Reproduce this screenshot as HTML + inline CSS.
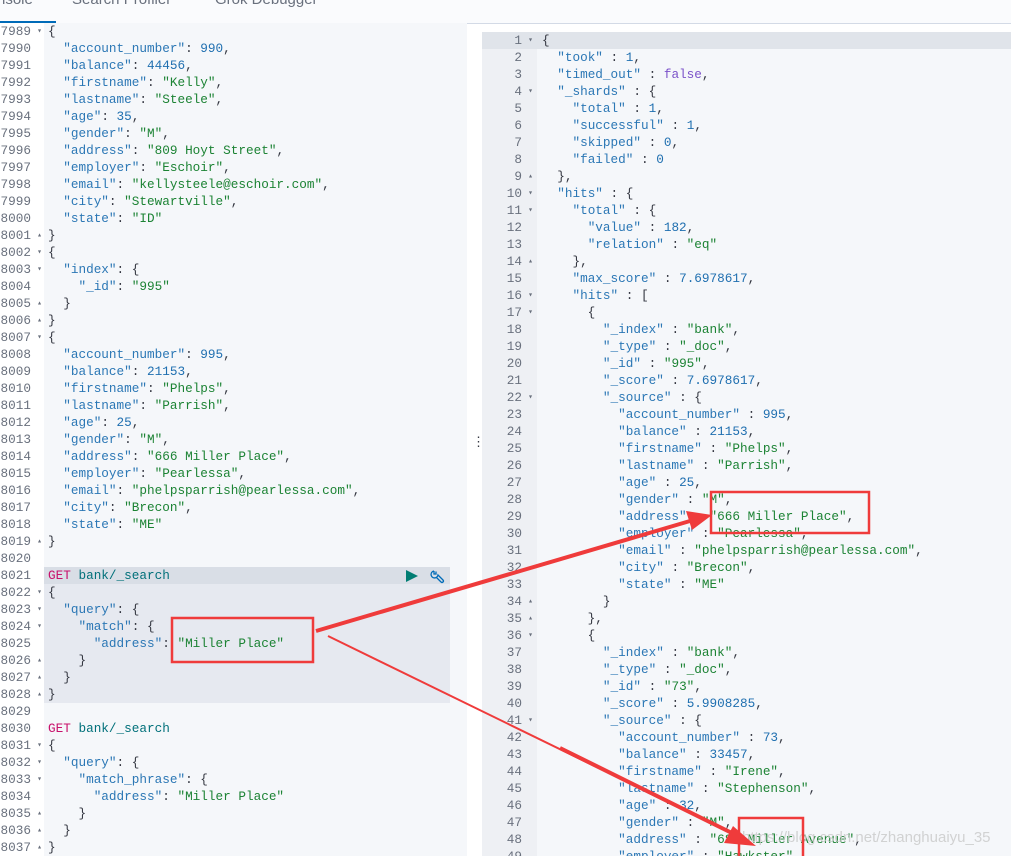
<!DOCTYPE html>
<html><head><meta charset="utf-8"><style>
*{margin:0;padding:0;box-sizing:border-box}
body{width:1011px;height:856px;overflow:hidden;background:#fff;font-family:"Liberation Mono",monospace;font-size:12.7px;color:#343741;position:relative}
.tabs{position:absolute;left:0;top:0;width:1011px;height:24px;background:#fafbfd;border-bottom:1px solid #d3dae6;font-family:"Liberation Sans",sans-serif;font-size:15px;color:#69707d}
.tabs span{position:absolute;top:-9px}
.ul{position:absolute;left:0;top:21px;width:56px;height:3px;background:#006bb8}
.ed{position:absolute;overflow:hidden}
.g{position:absolute;top:0;bottom:0;text-align:right;color:#69707d}
.g .l{position:relative;padding-right:13px}
.c{position:absolute;top:0;bottom:0}
.l{height:17px;line-height:17px;white-space:pre}
.k{color:#2b77b5}.s{color:#1c8334}.n{color:#1f6fb0}.b{color:#7b52c9}.m{color:#c8106b}.u{color:#00707a}
.f{position:absolute;right:2px;top:0;font-size:8px;color:#69707d}
</style></head><body>
<div class="tabs"><span style="left:-3px">nsole</span><span style="left:72px">Search Profiler</span><span style="left:215px">Grok Debugger</span><div class="ul"></div></div>

<div class="ed" style="left:0;top:23px;width:467px;height:833px;background:#f5f7fa">
<div style="position:absolute;left:0;top:0;width:44px;height:833px;background:#fff"></div>
<div style="position:absolute;left:44px;top:544px;width:406px;height:136px;background:#e6e9f0"></div>
<div style="position:absolute;left:44px;top:544px;width:406px;height:17px;background:#d9dee6"></div>
<div class="g" style="left:0;width:44px">
<div class="l">7989<span class="f">▾</span></div><div class="l">7990</div><div class="l">7991</div><div class="l">7992</div><div class="l">7993</div><div class="l">7994</div><div class="l">7995</div><div class="l">7996</div><div class="l">7997</div><div class="l">7998</div><div class="l">7999</div><div class="l">8000</div>
<div class="l">8001<span class="f">▴</span></div><div class="l">8002<span class="f">▾</span></div><div class="l">8003<span class="f">▾</span></div><div class="l">8004</div><div class="l">8005<span class="f">▴</span></div><div class="l">8006<span class="f">▴</span></div><div class="l">8007<span class="f">▾</span></div>
<div class="l">8008</div><div class="l">8009</div><div class="l">8010</div><div class="l">8011</div><div class="l">8012</div><div class="l">8013</div><div class="l">8014</div><div class="l">8015</div><div class="l">8016</div><div class="l">8017</div><div class="l">8018</div>
<div class="l">8019<span class="f">▴</span></div><div class="l">8020</div><div class="l">8021</div><div class="l">8022<span class="f">▾</span></div><div class="l">8023<span class="f">▾</span></div><div class="l">8024<span class="f">▾</span></div><div class="l">8025</div><div class="l">8026<span class="f">▴</span></div><div class="l">8027<span class="f">▴</span></div><div class="l">8028<span class="f">▴</span></div>
<div class="l">8029</div><div class="l">8030</div><div class="l">8031<span class="f">▾</span></div><div class="l">8032<span class="f">▾</span></div><div class="l">8033<span class="f">▾</span></div><div class="l">8034</div><div class="l">8035<span class="f">▴</span></div><div class="l">8036<span class="f">▴</span></div><div class="l">8037<span class="f">▴</span></div>
</div>
<div class="c" style="left:48px">
<div class="l">{</div>
<div class="l">  <span class="k">"account_number"</span>: <span class="n">990</span>,</div>
<div class="l">  <span class="k">"balance"</span>: <span class="n">44456</span>,</div>
<div class="l">  <span class="k">"firstname"</span>: <span class="s">"Kelly"</span>,</div>
<div class="l">  <span class="k">"lastname"</span>: <span class="s">"Steele"</span>,</div>
<div class="l">  <span class="k">"age"</span>: <span class="n">35</span>,</div>
<div class="l">  <span class="k">"gender"</span>: <span class="s">"M"</span>,</div>
<div class="l">  <span class="k">"address"</span>: <span class="s">"809 Hoyt Street"</span>,</div>
<div class="l">  <span class="k">"employer"</span>: <span class="s">"Eschoir"</span>,</div>
<div class="l">  <span class="k">"email"</span>: <span class="s">"kellysteele@eschoir.com"</span>,</div>
<div class="l">  <span class="k">"city"</span>: <span class="s">"Stewartville"</span>,</div>
<div class="l">  <span class="k">"state"</span>: <span class="s">"ID"</span></div>
<div class="l">}</div>
<div class="l">{</div>
<div class="l">  <span class="k">"index"</span>: {</div>
<div class="l">    <span class="k">"_id"</span>: <span class="s">"995"</span></div>
<div class="l">  }</div>
<div class="l">}</div>
<div class="l">{</div>
<div class="l">  <span class="k">"account_number"</span>: <span class="n">995</span>,</div>
<div class="l">  <span class="k">"balance"</span>: <span class="n">21153</span>,</div>
<div class="l">  <span class="k">"firstname"</span>: <span class="s">"Phelps"</span>,</div>
<div class="l">  <span class="k">"lastname"</span>: <span class="s">"Parrish"</span>,</div>
<div class="l">  <span class="k">"age"</span>: <span class="n">25</span>,</div>
<div class="l">  <span class="k">"gender"</span>: <span class="s">"M"</span>,</div>
<div class="l">  <span class="k">"address"</span>: <span class="s">"666 Miller Place"</span>,</div>
<div class="l">  <span class="k">"employer"</span>: <span class="s">"Pearlessa"</span>,</div>
<div class="l">  <span class="k">"email"</span>: <span class="s">"phelpsparrish@pearlessa.com"</span>,</div>
<div class="l">  <span class="k">"city"</span>: <span class="s">"Brecon"</span>,</div>
<div class="l">  <span class="k">"state"</span>: <span class="s">"ME"</span></div>
<div class="l">}</div>
<div class="l"> </div>
<div class="l"><span class="m">GET</span> <span class="u">bank/_search</span></div>
<div class="l">{</div>
<div class="l">  <span class="k">"query"</span>: {</div>
<div class="l">    <span class="k">"match"</span>: {</div>
<div class="l">      <span class="k">"address"</span>: <span class="s">"Miller Place"</span></div>
<div class="l">    }</div>
<div class="l">  }</div>
<div class="l">}</div>
<div class="l"> </div>
<div class="l"><span class="m">GET</span> <span class="u">bank/_search</span></div>
<div class="l">{</div>
<div class="l">  <span class="k">"query"</span>: {</div>
<div class="l">    <span class="k">"match_phrase"</span>: {</div>
<div class="l">      <span class="k">"address"</span>: <span class="s">"Miller Place"</span></div>
<div class="l">    }</div>
<div class="l">  }</div>
<div class="l">}</div>
</div>
<svg style="position:absolute;left:404px;top:546px" width="44" height="16"><polygon points="2,1 14,7 2,13" fill="#017d73"/><g transform="translate(27,1)" fill="none" stroke="#006bb8" stroke-width="1.3"><path d="M3 1 A3.5 3.5 0 1 0 7 5 L12 10 A1.4 1.4 0 0 1 10 12 L5 7 M3 1 L3 4 L5 4 L5 1.5"/></g></svg>
</div>
<div style="position:absolute;left:472px;top:434px;color:#343741;font-size:13px;font-family:'Liberation Sans'">⋮</div>

<div class="ed" style="left:482px;top:32px;width:529px;height:824px;background:#f5f7fa">
<div style="position:absolute;left:0;top:0;width:55px;height:824px;background:#eef0f4"></div>
<div style="position:absolute;left:0;top:0;width:529px;height:17px;background:#e0e4ea"></div>
<div class="g" style="left:0;width:53px">
<div class="l">1<span class="f">▾</span></div><div class="l">2</div><div class="l">3</div><div class="l">4<span class="f">▾</span></div><div class="l">5</div><div class="l">6</div><div class="l">7</div><div class="l">8</div><div class="l">9<span class="f">▴</span></div><div class="l">10<span class="f">▾</span></div>
<div class="l">11<span class="f">▾</span></div><div class="l">12</div><div class="l">13</div><div class="l">14<span class="f">▴</span></div><div class="l">15</div><div class="l">16<span class="f">▾</span></div><div class="l">17<span class="f">▾</span></div><div class="l">18</div><div class="l">19</div><div class="l">20</div>
<div class="l">21</div><div class="l">22<span class="f">▾</span></div><div class="l">23</div><div class="l">24</div><div class="l">25</div><div class="l">26</div><div class="l">27</div><div class="l">28</div><div class="l">29</div><div class="l">30</div>
<div class="l">31</div><div class="l">32</div><div class="l">33</div><div class="l">34<span class="f">▴</span></div><div class="l">35<span class="f">▴</span></div><div class="l">36<span class="f">▾</span></div><div class="l">37</div><div class="l">38</div><div class="l">39</div><div class="l">40</div>
<div class="l">41<span class="f">▾</span></div><div class="l">42</div><div class="l">43</div><div class="l">44</div><div class="l">45</div><div class="l">46</div><div class="l">47</div><div class="l">48</div><div class="l">49</div>
</div>
<div class="c" style="left:60px">
<div class="l">{</div>
<div class="l">  <span class="k">"took"</span> : <span class="n">1</span>,</div>
<div class="l">  <span class="k">"timed_out"</span> : <span class="b">false</span>,</div>
<div class="l">  <span class="k">"_shards"</span> : {</div>
<div class="l">    <span class="k">"total"</span> : <span class="n">1</span>,</div>
<div class="l">    <span class="k">"successful"</span> : <span class="n">1</span>,</div>
<div class="l">    <span class="k">"skipped"</span> : <span class="n">0</span>,</div>
<div class="l">    <span class="k">"failed"</span> : <span class="n">0</span></div>
<div class="l">  },</div>
<div class="l">  <span class="k">"hits"</span> : {</div>
<div class="l">    <span class="k">"total"</span> : {</div>
<div class="l">      <span class="k">"value"</span> : <span class="n">182</span>,</div>
<div class="l">      <span class="k">"relation"</span> : <span class="s">"eq"</span></div>
<div class="l">    },</div>
<div class="l">    <span class="k">"max_score"</span> : <span class="n">7.6978617</span>,</div>
<div class="l">    <span class="k">"hits"</span> : [</div>
<div class="l">      {</div>
<div class="l">        <span class="k">"_index"</span> : <span class="s">"bank"</span>,</div>
<div class="l">        <span class="k">"_type"</span> : <span class="s">"_doc"</span>,</div>
<div class="l">        <span class="k">"_id"</span> : <span class="s">"995"</span>,</div>
<div class="l">        <span class="k">"_score"</span> : <span class="n">7.6978617</span>,</div>
<div class="l">        <span class="k">"_source"</span> : {</div>
<div class="l">          <span class="k">"account_number"</span> : <span class="n">995</span>,</div>
<div class="l">          <span class="k">"balance"</span> : <span class="n">21153</span>,</div>
<div class="l">          <span class="k">"firstname"</span> : <span class="s">"Phelps"</span>,</div>
<div class="l">          <span class="k">"lastname"</span> : <span class="s">"Parrish"</span>,</div>
<div class="l">          <span class="k">"age"</span> : <span class="n">25</span>,</div>
<div class="l">          <span class="k">"gender"</span> : <span class="s">"M"</span>,</div>
<div class="l">          <span class="k">"address"</span> : <span class="s">"666 Miller Place"</span>,</div>
<div class="l">          <span class="k">"employer"</span> : <span class="s">"Pearlessa"</span>,</div>
<div class="l">          <span class="k">"email"</span> : <span class="s">"phelpsparrish@pearlessa.com"</span>,</div>
<div class="l">          <span class="k">"city"</span> : <span class="s">"Brecon"</span>,</div>
<div class="l">          <span class="k">"state"</span> : <span class="s">"ME"</span></div>
<div class="l">        }</div>
<div class="l">      },</div>
<div class="l">      {</div>
<div class="l">        <span class="k">"_index"</span> : <span class="s">"bank"</span>,</div>
<div class="l">        <span class="k">"_type"</span> : <span class="s">"_doc"</span>,</div>
<div class="l">        <span class="k">"_id"</span> : <span class="s">"73"</span>,</div>
<div class="l">        <span class="k">"_score"</span> : <span class="n">5.9908285</span>,</div>
<div class="l">        <span class="k">"_source"</span> : {</div>
<div class="l">          <span class="k">"account_number"</span> : <span class="n">73</span>,</div>
<div class="l">          <span class="k">"balance"</span> : <span class="n">33457</span>,</div>
<div class="l">          <span class="k">"firstname"</span> : <span class="s">"Irene"</span>,</div>
<div class="l">          <span class="k">"lastname"</span> : <span class="s">"Stephenson"</span>,</div>
<div class="l">          <span class="k">"age"</span> : <span class="n">32</span>,</div>
<div class="l">          <span class="k">"gender"</span> : <span class="s">"M"</span>,</div>
<div class="l">          <span class="k">"address"</span> : <span class="s">"684 Miller Avenue"</span>,</div>
<div class="l">          <span class="k">"employer"</span> : <span class="s">"Hawkster"</span>,</div>
</div>
</div>

<div style="position:absolute;left:742px;top:829px;font-family:'Liberation Sans';font-size:15px;color:rgba(200,200,200,.8)">https://blog.csdn.net/zhanghuaiyu_35</div>

<svg style="position:absolute;left:0;top:0" width="1011" height="856">
<g fill="none" stroke="#ef3b3b">
<rect x="172" y="618" width="141" height="44" stroke-width="2.5"/>
<rect x="711" y="492" width="158" height="41" stroke-width="2.5"/>
<rect x="739" y="818" width="64" height="40" stroke-width="2.5"/>
<line x1="316" y1="631" x2="690" y2="521" stroke-width="4"/>
<line x1="328" y1="636" x2="742" y2="838" stroke-width="2"/>
<line x1="560" y1="748" x2="742" y2="838" stroke-width="4"/>
</g>
<polygon points="712,515 686,511 692,530" fill="#ef3b3b"/>
<polygon points="756,846 733,826 724,843" fill="#ef3b3b"/>
</svg>
</body></html>
